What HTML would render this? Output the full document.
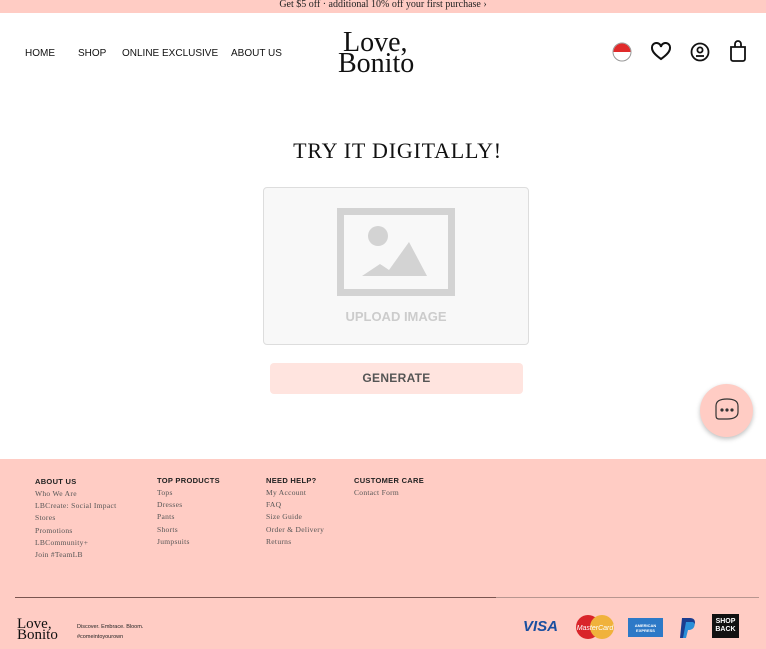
<!DOCTYPE html>
<html><head><meta charset="utf-8"><style>
*{margin:0;padding:0;box-sizing:border-box}
body{width:766px;height:649px;overflow:hidden;background:#fff;font-family:"Liberation Sans",sans-serif;position:relative}
.abs{position:absolute}
.top{left:0;top:0;width:766px;height:13px;background:#ffccc4;font-family:"Liberation Serif",serif;font-size:10px;text-align:center;line-height:10px;color:#222}
.nav{font-size:10px;color:#111;top:48px}
.logo{font-family:"Liberation Serif",serif;color:#111;font-size:28px;line-height:21px;left:338px;top:32px}
.foot{left:0;top:459px;width:766px;height:190px;background:#ffccc4}
.h{font-size:7.5px;font-weight:bold;color:#222;letter-spacing:.3px}
.l{font-family:"Liberation Serif",serif;font-size:7.5px;color:#555;line-height:12.2px;letter-spacing:.3px}
</style></head><body>
<div class="abs top">Get $5 off · additional 10% off your first purchase ›</div>
<div class="abs nav" style="left:25px">HOME</div>
<div class="abs nav" style="left:78px">SHOP</div>
<div class="abs nav" style="left:122px">ONLINE EXCLUSIVE</div>
<div class="abs nav" style="left:231px">ABOUT US</div>
<div class="abs logo"><span style="padding-left:5px">Love,</span><br>Bonito</div>
<svg class="abs" style="left:612px;top:42px" width="20" height="20"><circle cx="10" cy="10" r="9" fill="#fff" stroke="#999"/><path d="M1.5 10a8.5 8.5 0 0 1 17 0z" fill="#e02b2b"/></svg>
<svg class="abs" style="left:650px;top:42px" width="22" height="20" fill="none" stroke="#111" stroke-width="2"><path d="M11 17C4 12 2 9 2 6a4.5 4.5 0 0 1 9-1a4.5 4.5 0 0 1 9 1c0 3-2 6-9 11z"/></svg>
<svg class="abs" style="left:689px;top:41px" width="22" height="22" fill="none" stroke="#111" stroke-width="1.8"><circle cx="11" cy="11" r="8.5"/><circle cx="11" cy="9" r="2.6"/><path d="M7 15h8"/></svg>
<svg class="abs" style="left:728px;top:39px" width="20" height="24" fill="none" stroke="#111" stroke-width="1.8"><path d="M3 8h14v12a2 2 0 0 1-2 2H5a2 2 0 0 1-2-2z"/><path d="M7 8V5a3 3 0 0 1 6 0v3"/></svg>
<div class="abs" style="left:0;top:138px;width:795px;text-align:center;font-family:'Liberation Serif',serif;font-size:22px;letter-spacing:.8px;color:#111">TRY IT DIGITALLY!</div>
<div class="abs" style="left:263px;top:187px;width:266px;height:158px;background:#f8f8f8;border:1.5px solid #ddd;border-radius:4px"></div>
<svg class="abs" style="left:337px;top:208px" width="118" height="88"><rect x="3.5" y="3.5" width="111" height="81" fill="none" stroke="#d3d3d3" stroke-width="7"/><circle cx="41" cy="28" r="10" fill="#d3d3d3"/><path d="M25 68L43 56L52 62L72 34L90 68z" fill="#d3d3d3"/></svg>
<div class="abs" style="left:263px;top:309px;width:266px;text-align:center;font-size:13px;font-weight:bold;color:#ccc">UPLOAD IMAGE</div>
<div class="abs" style="left:270px;top:363px;width:253px;height:31px;background:#ffe4df;border-radius:4px;text-align:center;line-height:31px;font-size:12px;font-weight:bold;color:#555;letter-spacing:.3px">GENERATE</div>
<div class="abs" style="left:700px;top:384px;width:53px;height:53px;border-radius:50%;background:#ffccc4;box-shadow:0 2px 5px rgba(0,0,0,.25)"></div>
<svg class="abs" style="left:712px;top:397px" width="30" height="26" fill="none" stroke="#333" stroke-width="1.2"><path d="M4 9c0-5 4-7 11-7s11 2 11 7v6c0 5-4 7-11 7H7c-3 0-3-2-3-5z"/><circle cx="10" cy="13" r="1" fill="#333"/><circle cx="15" cy="13" r="1" fill="#333"/><circle cx="20" cy="13" r="1" fill="#333"/></svg>
<div class="abs foot"></div>
<div class="abs h" style="left:35px;top:477px">ABOUT US</div>
<div class="abs l" style="left:35px;top:488px">Who We Are<br>LBCreate: Social Impact<br>Stores<br>Promotions<br>LBCommunity+<br>Join #TeamLB</div>
<div class="abs h" style="left:157px;top:476px">TOP PRODUCTS</div>
<div class="abs l" style="left:157px;top:487px">Tops<br>Dresses<br>Pants<br>Shorts<br>Jumpsuits</div>
<div class="abs h" style="left:266px;top:476px">NEED HELP?</div>
<div class="abs l" style="left:266px;top:487px">My Account<br>FAQ<br>Size Guide<br>Order &amp; Delivery<br>Returns</div>
<div class="abs h" style="left:354px;top:476px">CUSTOMER CARE</div>
<div class="abs l" style="left:354px;top:487px">Contact Form</div>
<div class="abs" style="left:15px;top:597px;width:481px;height:1px;background:#7a5550"></div>
<div class="abs" style="left:496px;top:597px;width:263px;height:1px;background:#b89690"></div>
<div class="abs" style="left:17px;top:619px;font-family:'Liberation Serif',serif;font-size:15px;line-height:11px;color:#111">Love,<br>Bonito</div>
<div class="abs" style="left:77px;top:622px;font-size:5.5px;line-height:10px;color:#222">Discover. Embrace. Bloom.<br>#comeintoyourown</div>
<div class="abs" style="left:523px;top:618px;font-size:15px;font-weight:bold;font-style:italic;color:#1a4fa0">VISA</div>
<svg class="abs" style="left:576px;top:614px" width="38" height="26"><circle cx="12" cy="13" r="12" fill="#d9252a"/><circle cx="26" cy="13" r="12" fill="#f0b23b"/><text x="19" y="16" font-size="7" fill="#fff" text-anchor="middle" font-family="Liberation Sans" font-style="italic">MasterCard</text></svg>
<div class="abs" style="left:628px;top:618px;width:35px;height:19px;background:#2d79c7;color:#fff;font-size:4px;text-align:center;padding-top:5px;line-height:5px;font-weight:bold">AMERICAN<br>EXPRESS</div>
<svg class="abs" style="left:678px;top:616px" width="20" height="24"><path d="M4 2h8c5 0 6 4 4 8s-5 4-8 4l-2 8H2z" fill="#1b3d8f"/><path d="M8 6h6c3 0 3 3 2 5s-3 3-6 3l-2 8H5z" fill="#2a8fd8"/></svg>
<div class="abs" style="left:712px;top:614px;width:27px;height:24px;background:#111;color:#fff;font-size:7px;font-weight:bold;text-align:center;line-height:8px;padding-top:4px">SHOP<br>BACK</div>
</body></html>
